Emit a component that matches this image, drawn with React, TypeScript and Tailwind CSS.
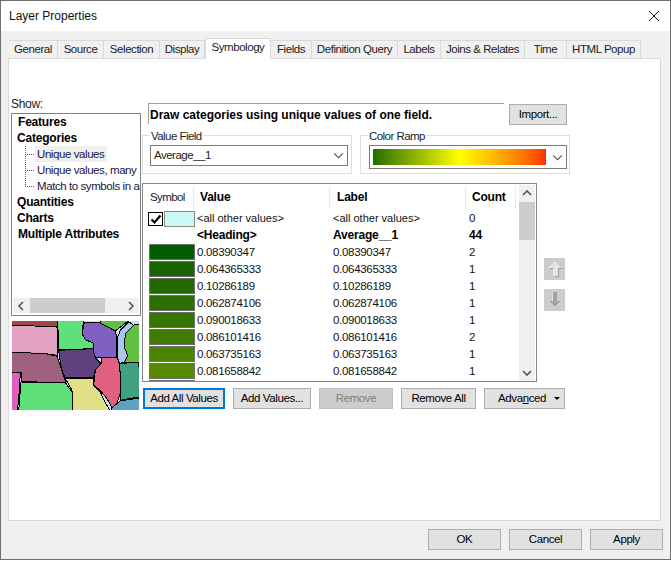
import type { ReactNode } from 'react';

const tabs = [
  { label: 'General', w: 'w-[49px]' },
  { label: 'Source', w: 'w-[46px]' },
  { label: 'Selection', w: 'w-[56px]' },
  { label: 'Display', w: 'w-[45px]' },
  { label: 'Symbology', w: 'w-[66px]', active: true },
  { label: 'Fields', w: 'w-[41px]' },
  { label: 'Definition Query', w: 'w-[86px]' },
  { label: 'Labels', w: 'w-[43px]' },
  { label: 'Joins & Relates', w: 'w-[84px]' },
  { label: 'Time', w: 'w-[42px]' },
  { label: 'HTML Popup', w: 'w-[74px]' },
];

const rows = [
  { value: '0.08390347', count: '2', color: 'bg-[#005c00]' },
  { value: '0.064365333', count: '1', color: 'bg-[#186400]' },
  { value: '0.10286189', count: '1', color: 'bg-[#226a00]' },
  { value: '0.062874106', count: '1', color: 'bg-[#2c6f00]' },
  { value: '0.090018633', count: '1', color: 'bg-[#367500]' },
  { value: '0.086101416', count: '2', color: 'bg-[#417c00]' },
  { value: '0.063735163', count: '1', color: 'bg-[#4c8400]' },
  { value: '0.081658842', count: '1', color: 'bg-[#558a00]' },
  { value: '', count: '', color: 'bg-[#5d9100]' },
];

// map outlines, pushed past the picture's edge so the frame has no black border
const regions = [
  { fill: '#a04848', d: '30,27 172,27 172,47 100,47 30,45' },
  { fill: '#e0a2c0', d: '30,46 100,47 168,48 172,60 172,135 135,130 70,127 30,127' },
  { fill: '#60c040', d: '300,27 390,27 345,62 300,38' },
  { fill: '#60c040', d: '390,45 421,42 421,155 372,155 382,135 372,110 375,70' },
  { fill: '#a8c8f0', d: '385,34 400,45 375,70 372,110 382,135 372,155 358,160 350,140 350,85 360,60' },
  { fill: '#5fe07a', d: '172,27 250,27 245,70 255,88 278,98 278,115 220,117 175,118' },
  { fill: '#8060c0', d: '252,35 300,38 345,62 350,85 348,140 285,142 278,115 278,98 255,88 245,70' },
  { fill: '#60407f', d: '175,120 278,115 285,142 302,160 285,178 280,200 195,203 183,175' },
  { fill: '#a06080', d: '30,127 70,127 135,130 170,138 183,175 197,218 110,215 62,213 62,187 30,185' },
  { fill: '#e060c0', d: '30,187 60,187 55,270 50,303 30,303' },
  { fill: '#5fe07a', d: '62,215 195,218 215,245 215,303 55,303' },
  { fill: '#e0e088', d: '195,205 280,203 280,225 300,245 310,268 330,303 217,303 215,240' },
  { fill: '#60a0c0', d: '335,292 350,280 360,272 421,262 421,303 330,303' },
  { fill: '#40a080', d: '358,160 412,155 421,185 421,260 385,265 360,270 362,240' },
  { fill: '#e06080', d: '302,142 350,140 358,165 362,240 350,280 335,292 320,265 300,240 280,225 285,178 302,160' },
];

function Chevron({ dir, className, thin }: { dir: 'up' | 'down' | 'left' | 'right'; className?: string; thin?: boolean }) {
  const points = {
    up: '1,6 5,2 9,6',
    down: '1,3 5,7 9,3',
    left: '6,1 2,5 6,9',
    right: '3,1 7,5 3,9',
  }[dir];
  return (
    <svg viewBox="0 0 10 10" className={className ?? 'w-[10px] h-[10px]'}>
      <polyline points={points} fill="none" stroke="#555" strokeWidth={thin ? 1 : 1.6} />
    </svg>
  );
}

function Btn({ children, className }: { children: ReactNode; className: string }) {
  return (
    <div className={`flex items-center justify-center pt-[1px] bg-[#e1e1e1] border border-[#adadad] text-[11.5px] tracking-[-0.4px] text-black ${className}`}>
      {children}
    </div>
  );
}

function Group({ title, className, children }: { title: string; className: string; children: ReactNode }) {
  return (
    <div className={`relative border border-[#dcdcdc] h-[39px] ${className}`}>
      <span className="absolute left-[7px] top-[-6px] bg-white px-[1px] text-[11.5px] leading-[13px] tracking-[-0.55px] text-[#222]">{title}</span>
      {children}
    </div>
  );
}

export default function App() {
  return (
    <div className="w-[671px] h-[564px] bg-white font-['Liberation_Sans',sans-serif] text-black">
      <div className="w-[671px] h-[560px] bg-[#f0f0f0] border border-[#6f6f6f] flex flex-col">
        {/* title bar */}
        <div className="h-[30px] bg-white flex items-center justify-between pl-[8px] pr-[10px] shrink-0">
          <span className="text-[12px] text-[#111]">Layer Properties</span>
          <svg viewBox="0 0 12 12" className="w-[12px] h-[12px]">
            <path d="M1 1 L11 11 M11 1 L1 11" stroke="#111" strokeWidth="1" fill="none" />
          </svg>
        </div>

        {/* tabs */}
        <div className="h-[27px] flex items-end pl-[8px] shrink-0 relative z-10">
          {tabs.map((t) => (
            <div
              key={t.label}
              className={`${t.w} flex items-center justify-center border-t border-r border-[#d9d9d9] text-[11.5px] tracking-[-0.45px] text-[#222] ${
                t.active ? 'h-[21px] bg-white border-l -mb-[1px] pb-[2px]' : 'h-[18px] pt-[1px]'
              }`}
            >
              {t.label}
            </div>
          ))}
        </div>

        {/* tab page */}
        <div className="ml-[7px] w-[653px] h-[463px] bg-white border border-[#d9d9d9] flex pl-[2px] pt-[38px] shrink-0">
          <div className="w-[130px] shrink-0">
            <div className="h-[16px] text-[12px] leading-[15px] tracking-[-0.3px] text-[#222]">Show:</div>
            <div className="h-[203px] border border-[#828282] flex flex-col overflow-hidden">
              <div className="flex-1 text-[12px] relative">
                <div className="h-[16px] leading-[16px] pl-[6px] font-bold tracking-[-0.2px]">Features</div>
                <div className="h-[16px] leading-[16px] pl-[5px] font-bold tracking-[-0.2px]">Categories</div>
                <div className="relative pl-[23px] text-[11.5px] tracking-[-0.42px] text-[#1b1540]">
                  <div className="absolute left-[13px] top-0 h-[41px] w-[9px] border-l border-dotted border-[#555]" />
                  <div className="absolute left-[13px] top-[8px] w-[9px] border-t border-dotted border-[#555]" />
                  <div className="absolute left-[13px] top-[24px] w-[9px] border-t border-dotted border-[#555]" />
                  <div className="absolute left-[13px] top-[40px] w-[9px] border-t border-dotted border-[#555]" />
                  <div className="h-[16px] leading-[16px] w-[72px] bg-[#f0f0f0] pl-[2px] whitespace-nowrap">Unique values</div>
                  <div className="h-[16px] leading-[16px] pl-[2px] whitespace-nowrap">Unique values, many</div>
                  <div className="h-[16px] leading-[16px] pl-[2px] whitespace-nowrap">Match to symbols in a</div>
                </div>
                <div className="h-[16px] leading-[16px] pl-[5px] font-bold tracking-[-0.2px]">Quantities</div>
                <div className="h-[16px] leading-[16px] pl-[5px] font-bold tracking-[-0.2px]">Charts</div>
                <div className="h-[16px] leading-[16px] pl-[6px] font-bold tracking-[-0.2px] whitespace-nowrap">Multiple Attributes</div>
              </div>
              <div className="h-[15px] mx-[1px] mb-[2px] bg-[#f0f0f0] flex items-center justify-between shrink-0">
                <div className="w-[17px] flex justify-center"><Chevron dir="left" /></div>
                <div className="h-full w-[75px] bg-[#cdcdcd] mr-auto" />
                <div className="w-[17px] flex justify-center"><Chevron dir="right" /></div>
              </div>
            </div>
            <svg viewBox="35 32 381 267" className="w-[127px] h-[89px] mt-[5px] ml-[1px] block" shapeRendering="crispEdges">
              <rect x="30" y="27" width="391" height="276" fill="#c8e0f8" />
              {regions.map((r) => (
                <polygon key={r.d} points={r.d} fill={r.fill} stroke="#000" strokeWidth="3" />
              ))}
            </svg>
          </div>

          <div className="ml-[1px] w-[430px] shrink-0 pt-[6px]">
            {/* description + import */}
            <div className="flex h-[22px] pl-[6px]">
              <div className="w-[356px] h-[21px] border-t border-l border-[#a0a0a0] pl-[1px] text-[12px] leading-[23px] font-bold whitespace-nowrap">
                Draw categories using unique values of one field.
              </div>
              <Btn className="ml-[5px] mt-[1px] w-[58px] h-[21px]">Import...</Btn>
            </div>

            {/* value field + ramp */}
            <div className="flex gap-[8px] mt-[10px]">
              <Group title="Value Field" className="w-[210px] pl-[7px] pt-[9px]">
                <div className="w-[198px] h-[21px] border border-[#7a7a7a] flex items-center justify-between pl-[3px] pr-[3px]">
                  <span className="pt-[1px] text-[11.5px] tracking-[-0.5px] text-[#222]">Average__1</span>
                  <Chevron dir="down" thin className="w-[11px] h-[11px]" />
                </div>
              </Group>
              <Group title="Color Ramp" className="w-[210px] pl-[8px] pt-[9px]">
                <div className="w-[198px] h-[24px] border border-[#7a7a7a] flex items-center pl-[3px] pr-[3px] justify-between">
                  <div className="w-[173px] h-[16px] bg-gradient-to-r from-[#1f6f00] via-[#ffff00] to-[#ff2a00]" />
                  <Chevron dir="down" thin className="w-[11px] h-[11px]" />
                </div>
              </Group>
            </div>

            {/* table + up/down */}
            <div className="flex mt-[9px]">
              <div className="w-[395px] h-[199px] border border-[#828790] flex overflow-hidden">
                <div className="w-[376px] shrink-0">
                  <div className="h-[26px] flex items-center text-[12px]">
                    <div className="w-[51px] h-[23px] border-r border-[#e8e8e8] pl-[7px] leading-[23px] text-[11.5px] tracking-[-0.6px] text-[#222]">Symbol</div>
                    <div className="w-[136px] h-[23px] border-r border-[#e8e8e8] pl-[6px] leading-[23px] font-bold tracking-[-0.2px]">Value</div>
                    <div className="w-[136px] h-[23px] border-r border-[#e8e8e8] pl-[7px] leading-[23px] font-bold tracking-[-0.2px]">Label</div>
                    <div className="w-[50px] h-[23px] border-r border-[#e8e8e8] pl-[6px] leading-[23px] font-bold tracking-[-0.2px]">Count</div>
                  </div>
                  <div className="text-[11.5px] tracking-[-0.3px] text-[#111]">
                    <div className="h-[17px] flex items-center">
                      <div className="w-[54px] pl-[5px] flex items-center shrink-0">
                        <div className="w-[15px] h-[14px] border border-black flex items-center justify-center">
                          <svg viewBox="0 0 12 12" className="w-[12px] h-[12px]">
                            <path d="M1.5 6.5 L4.5 9.5 L10.5 2.5" fill="none" stroke="#000" strokeWidth="2.2" />
                          </svg>
                        </div>
                        <div className="ml-[1px] w-[31px] h-[16px] bg-[#ccf8f5] border border-[#8a8a8a]" />
                      </div>
                      <div className="w-[136px] shrink-0 text-[11px] tracking-normal">&lt;all other values&gt;</div>
                      <div className="w-[136px] shrink-0 text-[11px] tracking-normal">&lt;all other values&gt;</div>
                      <div>0</div>
                    </div>
                    <div className="h-[17px] pb-[1px] flex items-center text-[12px] font-bold tracking-[-0.2px] text-black">
                      <div className="w-[54px] shrink-0" />
                      <div className="w-[136px] shrink-0">&lt;Heading&gt;</div>
                      <div className="w-[136px] shrink-0">Average__1</div>
                      <div>44</div>
                    </div>
                    {rows.map((r, i) => (
                      <div key={i} className="h-[17px] pb-[1px] flex items-center">
                        <div className="w-[54px] pl-[6px] shrink-0">
                          <div className={`w-[46px] h-[16px] border border-[#6e6e6e] ${r.color}`} />
                        </div>
                        <div className="w-[136px] pt-[1px] shrink-0">{r.value}</div>
                        <div className="w-[136px] pt-[1px] shrink-0">{r.value}</div>
                        <div className="pt-[1px]">{r.count}</div>
                      </div>
                    ))}
                  </div>
                </div>
                <div className="w-[16px] mt-[1px] bg-[#f0f0f0] flex flex-col items-center">
                  <div className="h-[17px] flex items-center justify-center"><Chevron dir="up" /></div>
                  <div className="w-[16px] h-[38px] bg-[#cdcdcd]" />
                  <div className="mt-auto h-[17px] flex items-center justify-center"><Chevron dir="down" /></div>
                </div>
              </div>

              <div className="ml-[7px] pt-[75px] flex flex-col gap-[9px]">
                <div className="w-[21px] h-[22px] bg-[#cccccc] flex items-center justify-center">
                  <svg viewBox="0 0 16 18" className="w-[16px] h-[18px]">
                    <polygon points="9,2 16,9 12,9 12,17 8,17 8,9 3,9" fill="#9a9a9a" />
                    <polygon points="8,1 15,8 11,8 11,16 6,16 6,8 1,8" fill="#e6e6e6" />
                  </svg>
                </div>
                <div className="w-[21px] h-[22px] bg-[#cccccc] flex items-center justify-center">
                  <svg viewBox="0 0 16 18" className="w-[16px] h-[18px]">
                    <polygon points="8,17 1,10 5,10 5,2 10,2 10,10 15,10" fill="#e6e6e6" />
                    <polygon points="8,16 2,10 6,10 6,1 10,1 10,10 14,10" fill="#a2a2a2" />
                  </svg>
                </div>
              </div>
            </div>

            {/* table buttons */}
            <div className="flex mt-[6px] pl-[1px]">
              <Btn className="w-[82px] h-[21px] !border-2 !border-[#0078d7]">Add All Values</Btn>
              <Btn className="ml-[8px] w-[78px] h-[21px]">Add Values...</Btn>
              <Btn className="ml-[8px] w-[74px] h-[21px] !bg-[#cccccc] !border-[#bfbfbf] !text-[#808080]">Remove</Btn>
              <Btn className="ml-[8px] w-[75px] h-[21px]">Remove All</Btn>
              <Btn className="ml-[8px] w-[81px] h-[21px] relative pr-[5px]">
                <span>Adva<span className="underline">n</span>ced</span>
                <span className="absolute right-[4px] top-[8px] w-0 h-0 border-x-[3px] border-x-transparent border-t-[3px] border-t-black" />
              </Btn>
            </div>
          </div>
        </div>

        {/* dialog buttons */}
        <div className="flex justify-end gap-[8px] pt-[8px] pr-[7px]">
          <Btn className="w-[73px] h-[21px]">OK</Btn>
          <Btn className="w-[73px] h-[21px]">Cancel</Btn>
          <Btn className="w-[73px] h-[21px]">Apply</Btn>
        </div>
      </div>
    </div>
  );
}
